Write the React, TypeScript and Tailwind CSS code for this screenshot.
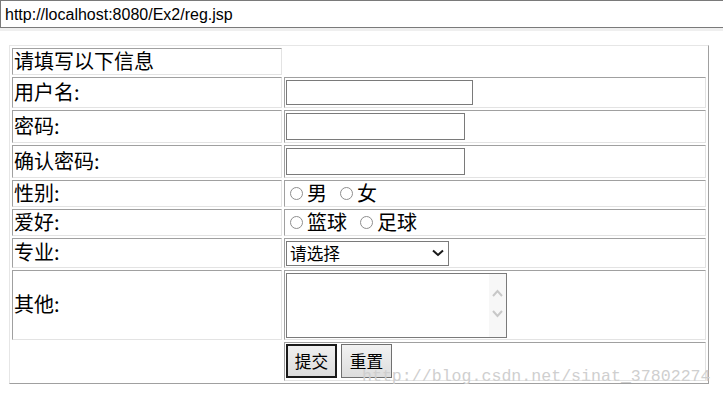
import React from "react";

const cell =
  "border border-t-[#a0a0a0] border-l-[#a0a0a0] border-r-[#e3e3e3] border-b-[#e3e3e3] flex items-center";

function Radio() {
  return <span className="block w-[13px] h-[13px] rounded-full border border-[#8e8e8e] bg-white shrink-0" />;
}

function Label({ text }: { text: string }) {
  return <div className={`${cell} pl-[1px] pb-[2px]`}><span className="leading-[22px]">{text}</span></div>;
}

export default function App() {
  return (
    <div
      className="relative w-[723px] h-[396px] bg-white overflow-hidden text-black"
      style={{ fontFamily: '"Noto Sans CJK SC", "Noto Sans", sans-serif' }}
    >
      <div
        className="h-[28px] w-[724px] border-y border-l border-[#7a7a7a] flex items-center pl-[4px] pt-[2px] text-[16px] leading-[18px]"
        style={{ fontFamily: '"Liberation Sans", Arial, sans-serif' }}
      >
        http://localhost:8080/Ex2/reg.jsp
      </div>
      <div className="h-[3px] bg-[#efefef]" />

      <div className="mt-[14px] ml-[9px] w-[700px] border border-t-[#e6e6e6] border-l-[#e6e6e6] border-r-[#a0a0a0] border-b-[#a0a0a0] p-[2px] grid grid-cols-[270px_422px] grid-rows-[27px_31px_33px_33px_27px_27px_30px_70px_39px] gap-[2px] text-[20px]">
        <Label text="请填写以下信息" />
        <div />

        <Label text="用户名:" />
        <div className={`${cell} pl-[1px]`}>
          <div className="w-[187px] h-[25px] border border-[#7a7a7a] bg-white" />
        </div>

        <Label text="密码:" />
        <div className={`${cell} pl-[1px]`}>
          <div className="w-[179px] h-[27px] border border-[#7a7a7a] bg-white" />
        </div>

        <Label text="确认密码:" />
        <div className={`${cell} pl-[1px]`}>
          <div className="w-[179px] h-[27px] border border-[#7a7a7a] bg-white" />
        </div>

        <Label text="性别:" />
        <div className={`${cell} pl-[5px]`}>
          <Radio />
          <span className="ml-[4px] leading-[22px] pb-[2px]">男</span>
          <span className="ml-[13px]"><Radio /></span>
          <span className="ml-[4px] leading-[22px] pb-[2px]">女</span>
        </div>

        <Label text="爱好:" />
        <div className={`${cell} pl-[5px]`}>
          <Radio />
          <span className="ml-[4px] leading-[22px] pb-[2px]">篮球</span>
          <span className="ml-[13px]"><Radio /></span>
          <span className="ml-[4px] leading-[22px] pb-[2px]">足球</span>
        </div>

        <Label text="专业:" />
        <div className={`${cell} pl-[1px]`}>
          <div className="w-[163px] h-[25px] border border-[#7a7a7a] bg-white flex items-center justify-between pl-[3px] pr-[4px] text-[16.67px] leading-[20px]">
            <span>请选择</span>
            <svg width="12" height="8" viewBox="0 0 12 8">
              <polyline points="1,1.5 6,6 11,1.5" fill="none" stroke="#1a1a1a" strokeWidth="2" />
            </svg>
          </div>
        </div>

        <Label text="其他:" />
        <div className={`${cell} pl-[1px] !items-start pt-[2px]`}>
          <div className="w-[221px] h-[65px] border border-[#7a7a7a] bg-white flex justify-end">
            <div className="w-[17px] h-full bg-[#f7f7f7] flex flex-col items-center pt-[15px] gap-[13px]">
              <svg width="11" height="8" viewBox="0 0 11 8">
                <polyline points="1,7 5.5,2 10,7" fill="none" stroke="#c8c8c8" strokeWidth="2" />
              </svg>
              <svg width="11" height="8" viewBox="0 0 11 8">
                <polyline points="1,1 5.5,6 10,1" fill="none" stroke="#c8c8c8" strokeWidth="2" />
              </svg>
            </div>
          </div>
        </div>

        <div />
        <div className={`${cell} pl-[1px] !items-start pt-[1px]`}>
          <div className="w-[51px] h-[34px] border-2 border-[#1a1a1a] bg-gradient-to-b from-[#f0f0f0] to-[#dcdcdc] flex items-center justify-center text-[16.67px]">
            提交
          </div>
          <div className="ml-[4px] w-[51px] h-[34px] border border-[#707070] bg-gradient-to-b from-[#f2f2f2] to-[#dddddd] flex items-center justify-center text-[16.67px]">
            重置
          </div>
        </div>
      </div>

      <div
        className="absolute left-[362px] top-[368px] text-[16.6px] leading-[17px] text-[#cfcfcf] whitespace-nowrap"
        style={{ fontFamily: '"Liberation Mono", "Courier New", monospace' }}
      >
        http://blog.csdn.net/sinat_37802274
      </div>
    </div>
  );
}
